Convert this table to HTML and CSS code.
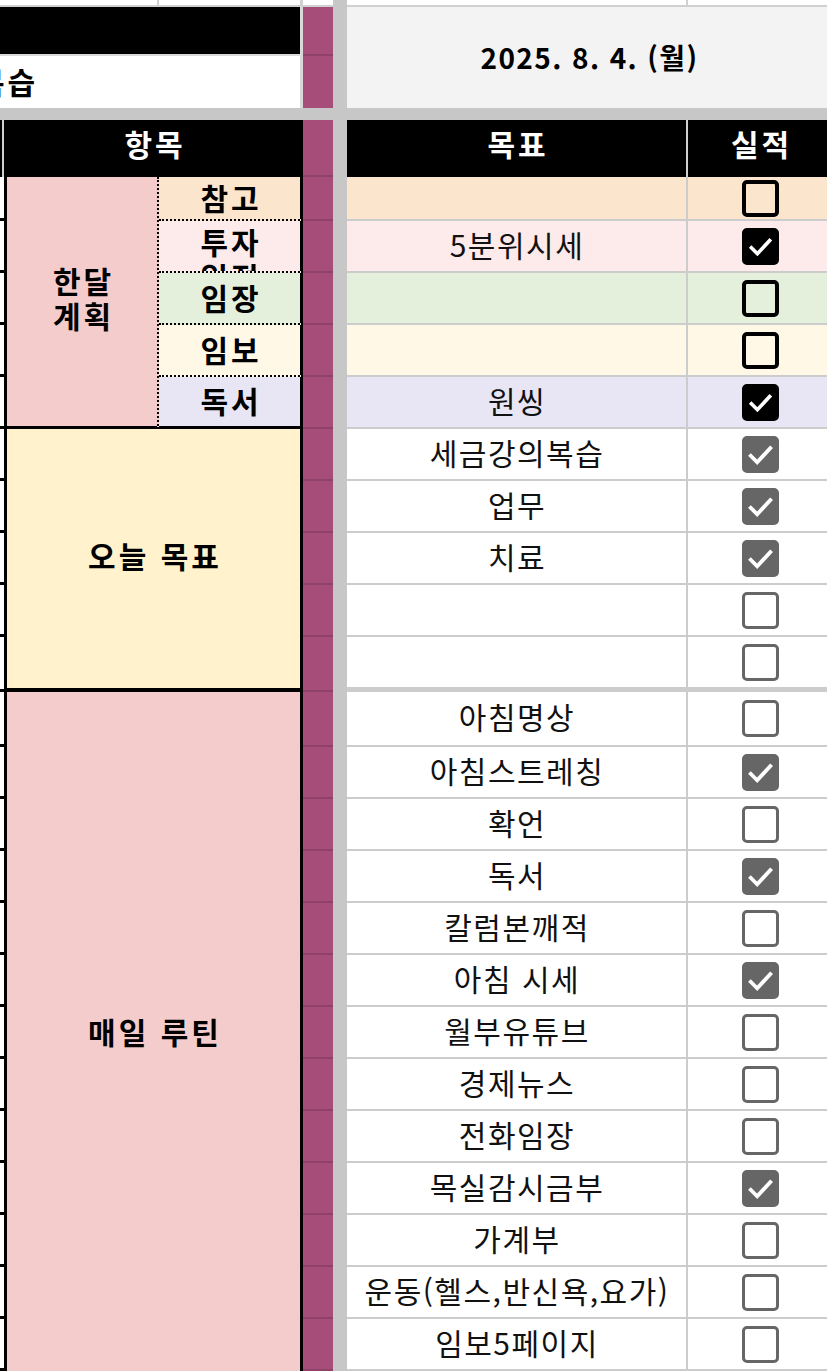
FILE: index.html
```html
<!DOCTYPE html>
<html lang="ko">
<head>
    <meta charset="UTF-8">
    <meta name="viewport" content="width=device-width, initial-scale=1.0">
    <title>데일리 체크</title>
    <link rel="stylesheet" href="styles.css">
</head>
<body>
    <div class="sheet">
        <div class="divider-col"></div>
        <div class="divider-row"></div>

        <!-- previous row, cut off at the top -->
        <div class="strip strip-left"></div>
        <div class="strip strip-sub"></div>
        <div class="strip strip-band"></div>
        <div class="strip strip-goal"></div>
        <div class="strip strip-check"></div>

        <!-- title rows -->
        <div class="title-bar"></div>
        <div class="band"></div>
        <div class="date">2025. 8. 4. (월)</div>
        <div class="memo"><span>복습</span></div>
        <div class="band band-last"></div>

        <!-- header -->
        <div class="edge edge-head"></div>
        <div class="head head-item">항목</div>
        <div class="band"></div>
        <div class="head head-goal">목표</div>
        <div class="head head-check">실적</div>

        <!-- 한달 계획 -->
        <div class="edge"></div>
        <div class="month">한달<br>계획</div>
        <div class="sub tone-ref">참고</div>
        <div class="band"></div>
        <div class="goal tone-ref"></div>
        <div class="check tone-ref"><span class="box"></span></div>

        <div class="edge"></div>
        <div class="sub sub-wrap tone-invest">투자<br>일정</div>
        <div class="band"></div>
        <div class="goal tone-invest">5분위시세</div>
        <div class="check tone-invest"><span class="box on"><svg viewBox="0 0 28 28"><polyline points="4,14 11,21 24,7"/></svg></span></div>

        <div class="edge"></div>
        <div class="sub tone-visit">임장</div>
        <div class="band"></div>
        <div class="goal tone-visit"></div>
        <div class="check tone-visit"><span class="box"></span></div>

        <div class="edge"></div>
        <div class="sub tone-report">임보</div>
        <div class="band"></div>
        <div class="goal tone-report"></div>
        <div class="check tone-report"><span class="box"></span></div>

        <div class="edge"></div>
        <div class="sub sub-last tone-read">독서</div>
        <div class="band"></div>
        <div class="goal tone-read">원씽</div>
        <div class="check tone-read"><span class="box on"><svg viewBox="0 0 28 28"><polyline points="4,14 11,21 24,7"/></svg></span></div>

        <!-- 오늘 목표 -->
        <div class="edge"></div>
        <div class="today">오늘 목표</div>
        <div class="band"></div>
        <div class="goal">세금강의복습</div>
        <div class="check"><span class="box grey on"><svg viewBox="0 0 28 28"><polyline points="4,14 11,21 24,7"/></svg></span></div>

        <div class="edge"></div>
        <div class="band"></div>
        <div class="goal">업무</div>
        <div class="check"><span class="box grey on"><svg viewBox="0 0 28 28"><polyline points="4,14 11,21 24,7"/></svg></span></div>

        <div class="edge"></div>
        <div class="band"></div>
        <div class="goal">치료</div>
        <div class="check"><span class="box grey on"><svg viewBox="0 0 28 28"><polyline points="4,14 11,21 24,7"/></svg></span></div>

        <div class="edge"></div>
        <div class="band"></div>
        <div class="goal"></div>
        <div class="check"><span class="box grey"></span></div>

        <div class="edge"></div>
        <div class="band"></div>
        <div class="goal end"></div>
        <div class="check end"><span class="box grey"></span></div>

        <!-- 매일 루틴 -->
        <div class="edge"></div>
        <div class="routine">매일 루틴</div>
        <div class="band"></div>
        <div class="goal">아침명상</div>
        <div class="check"><span class="box grey"></span></div>

        <div class="edge"></div>
        <div class="band"></div>
        <div class="goal">아침스트레칭</div>
        <div class="check"><span class="box grey on"><svg viewBox="0 0 28 28"><polyline points="4,14 11,21 24,7"/></svg></span></div>

        <div class="edge"></div>
        <div class="band"></div>
        <div class="goal">확언</div>
        <div class="check"><span class="box grey"></span></div>

        <div class="edge"></div>
        <div class="band"></div>
        <div class="goal">독서</div>
        <div class="check"><span class="box grey on"><svg viewBox="0 0 28 28"><polyline points="4,14 11,21 24,7"/></svg></span></div>

        <div class="edge"></div>
        <div class="band"></div>
        <div class="goal">칼럼본깨적</div>
        <div class="check"><span class="box grey"></span></div>

        <div class="edge"></div>
        <div class="band"></div>
        <div class="goal">아침 시세</div>
        <div class="check"><span class="box grey on"><svg viewBox="0 0 28 28"><polyline points="4,14 11,21 24,7"/></svg></span></div>

        <div class="edge"></div>
        <div class="band"></div>
        <div class="goal">월부유튜브</div>
        <div class="check"><span class="box grey"></span></div>

        <div class="edge"></div>
        <div class="band"></div>
        <div class="goal">경제뉴스</div>
        <div class="check"><span class="box grey"></span></div>

        <div class="edge"></div>
        <div class="band"></div>
        <div class="goal">전화임장</div>
        <div class="check"><span class="box grey"></span></div>

        <div class="edge"></div>
        <div class="band"></div>
        <div class="goal">목실감시금부</div>
        <div class="check"><span class="box grey on"><svg viewBox="0 0 28 28"><polyline points="4,14 11,21 24,7"/></svg></span></div>

        <div class="edge"></div>
        <div class="band"></div>
        <div class="goal">가계부</div>
        <div class="check"><span class="box grey"></span></div>

        <div class="edge"></div>
        <div class="band"></div>
        <div class="goal">운동(헬스,반신욕,요가)</div>
        <div class="check"><span class="box grey"></span></div>

        <div class="edge"></div>
        <div class="band"></div>
        <div class="goal">임보5페이지</div>
        <div class="check"><span class="box grey"></span></div>
    </div>
</body>
</html>
```

FILE: styles.css
```css
* {
    box-sizing: border-box;
}
body {
    margin: 0;
    overflow: hidden;
    background-color: #ffffff;
    font-family: "Noto Sans CJK KR", "Noto Sans", sans-serif;
    color: #000;
}
.sheet {
    display: grid;
    width: 832px;
    grid-template-columns: 4px 155px 144px 30px 14px 341px 144px;
    grid-template-rows: 7px 49px 52px 12px 57px 44px repeat(8, 52px) 55px 55px repeat(12, 52px);
}

/* frozen pane dividers */
.divider-col {
    grid-column: 5;
    grid-row: 1 / -1;
    background-color: #c7c7c7;
}
.divider-row {
    grid-column: 1 / -1;
    grid-row: 4;
    background-color: #c7c7c7;
}

/* cut off row at the top */
.strip {
    background-color: #fff;
    border-bottom: 2px solid #d0d0d0;
}
.strip-left {
    grid-column: 1 / span 2;
    border-right: 2px solid #d0d0d0;
}
.strip-sub {
    grid-column: 3;
    border-right: 3px solid #d0d0d0;
}
.strip-band {
    grid-column: 4;
}
.strip-goal {
    grid-column: 6;
    border-right: 2px solid #d0d0d0;
}
.strip-check {
    grid-column: 7;
}

.title-bar {
    grid-column: 1 / span 3;
    background-color: #000;
    border-right: 3px solid #d9d9d9;
    border-bottom: 2px solid #d9d9d9;
}
.memo {
    grid-column: 1 / span 3;
    background-color: #fff;
    border-right: 3px solid #d9d9d9;
    display: flex;
    align-items: center;
    overflow: hidden;
    white-space: nowrap;
    font-size: 30px;
    font-weight: 700;
    letter-spacing: 3px;
    padding-bottom: 2px;
}
.memo span {
    margin-left: -23px;
}
.date {
    grid-column: 6 / span 2;
    grid-row: span 2;
    background-color: #f3f3f3;
    display: flex;
    align-items: center;
    justify-content: center;
    font-size: 28px;
    font-weight: 700;
    letter-spacing: 1.4px;
    padding-bottom: 2px;
}

.band {
    grid-column: 4;
    background-color: #a64d79;
    border-bottom: 2px solid #8f4168;
}
.band-last {
    border-bottom: none;
}

.edge {
    grid-column: 1;
    background-color: #fff;
    border-bottom: 3px solid #000;
}
.edge-head {
    background-color: #000;
    border-right: 2px solid #cfcfcf;
    border-bottom: none;
}

.head {
    background-color: #000;
    color: #fff;
    font-size: 30px;
    font-weight: 700;
    letter-spacing: 3px;
    display: flex;
    align-items: center;
    justify-content: center;
    padding: 0 0 12px 3px;
}
.head-item {
    grid-column: 2 / span 2;
}
.head-goal {
    grid-column: 6;
    border-right: 2px solid #cfcfcf;
}
.head-check {
    grid-column: 7;
}

/* left hand labels */
.month, .sub, .today, .routine {
    display: flex;
    align-items: center;
    justify-content: center;
    text-align: center;
    font-size: 30px;
    font-weight: 700;
    line-height: 35px;
    letter-spacing: 3px;
    padding-left: 3px;
}
.month {
    grid-column: 2;
    grid-row: span 5;
    background-color: #f4cccc;
    border-left: 3px solid #000;
    border-right: 2px dotted #000;
    border-bottom: 3px solid #000;
    padding-bottom: 8px;
}
.sub {
    grid-column: 3;
    border-right: 3px solid #000;
    border-bottom: 2px dotted #000;
    overflow: hidden;
    padding-bottom: 2px;
}
.sub-wrap {
    align-items: flex-start;
    padding-top: 3px;
    padding-bottom: 0;
}
.sub-last {
    border-bottom: 3px solid #000;
}
.today {
    grid-column: 2 / span 2;
    grid-row: span 5;
    background-color: #fff2cc;
    border-left: 3px solid #000;
    border-right: 3px solid #000;
    border-bottom: 4px solid #000;
    padding-bottom: 6px;
}
.routine {
    grid-column: 2 / span 2;
    grid-row: span 13;
    background-color: #f4cccc;
    border-left: 3px solid #000;
    border-right: 3px solid #000;
}

.tone-ref { background-color: #fce5cd; }
.tone-invest { background-color: #fdeaea; }
.tone-visit { background-color: #e4efdc; }
.tone-report { background-color: #fff8e6; }
.tone-read { background-color: #e8e5f5; }

/* goal / result columns */
.goal {
    grid-column: 6;
    border-right: 2px solid #cccccc;
    border-bottom: 2px solid #cccccc;
    display: flex;
    align-items: center;
    justify-content: center;
    font-size: 30px;
    letter-spacing: 1.5px;
    padding: 0 0 5px 1px;
    white-space: nowrap;
    color: #111;
}
.check {
    grid-column: 7;
    border-bottom: 2px solid #cccccc;
    display: flex;
    align-items: center;
    justify-content: center;
}
.end {
    border-bottom-width: 5px;
}

.box {
    display: block;
    width: 37px;
    height: 37px;
    border: 4px solid #000;
    border-radius: 5px;
}
.box.on {
    background-color: #000;
}
.box.grey {
    border-color: #666;
    border-width: 3.5px;
}
.box.grey.on {
    background-color: #666;
}
.box svg {
    display: block;
    width: 100%;
    height: 100%;
}
.box polyline {
    fill: none;
    stroke: #fff;
    stroke-width: 3.5;
}
```
